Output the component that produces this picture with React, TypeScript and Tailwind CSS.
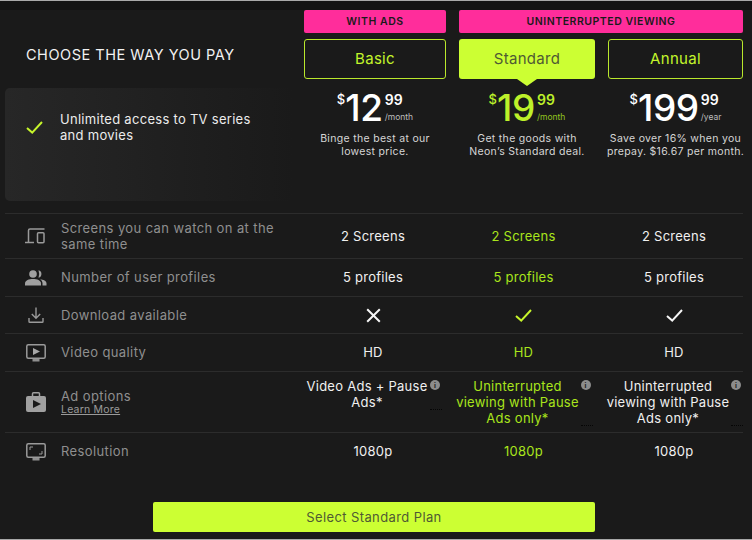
const cellTone = (i: number) => (i === 1 ? 'text-[#a9e51c]' : 'text-[#f0f0f0]');

const CheckMark = ({ className }: { className: string }) => (
  <svg width="17" height="13" viewBox="0 0 17 13" fill="none" className={className}>
    <path d="M1 7l5.2 4.6L16 1" stroke="currentColor" strokeWidth="2" />
  </svg>
);

const CrossMark = () => (
  <svg width="15" height="15" viewBox="0 0 15 15" fill="none" className="text-[#f5f5f5]">
    <path d="M1.2 1.2l12.6 12.6M13.8 1.2L1.2 13.8" stroke="currentColor" strokeWidth="2" />
  </svg>
);

const DevicesIcon = () => (
  <svg width="21" height="16" viewBox="0 0 21 16" fill="none" stroke="#9a9a9a" strokeWidth="1.5">
    <path d="M3.5 14V2.5q0-1.5 1.5-1.5h14.5" />
    <path d="M0 14.5h9" />
    <rect x="12.5" y="4.8" width="6.5" height="10" rx="1" />
  </svg>
);

const PeopleIcon = () => (
  <svg width="22" height="16" viewBox="0 0 22 16" fill="#a0a0a0">
    <circle cx="8" cy="4" r="3.8" />
    <path d="M13.5 0.3a3.8 3.8 0 0 1 0 7.4q1.4-3.7 0-7.4z" />
    <path d="M0 15.5v-2.2c0-2.8 4-4.3 8-4.3s8 1.5 8 4.3v2.2z" />
    <path d="M15 9.2c3.5 0.3 6.5 1.8 6.5 4.1v2.2h-4v-2.2c0-1.7-1-3-2.5-4.1z" />
  </svg>
);

const DownloadIcon = () => (
  <svg width="16" height="16" viewBox="0 0 16 16" fill="none" stroke="#9a9a9a" strokeWidth="1.4">
    <path d="M8 0.5v10.5M3.8 7l4.2 4.2L12.2 7" />
    <path d="M1 11v3.5q0 .8.8.8h12.4q.8 0 .8-.8V11" />
  </svg>
);

const VideoIcon = () => (
  <svg width="20" height="18" viewBox="0 0 20 18" fill="none">
    <rect x="0.8" y="0.8" width="18.4" height="13.4" rx="1.5" stroke="#9a9a9a" strokeWidth="1.5" />
    <path d="M7 4l7 3.5-7 3.5z" fill="#a8a8a8" />
    <rect x="6.5" y="15" width="7" height="2.5" fill="#8f8f8f" />
  </svg>
);

const AdsIcon = () => (
  <svg width="20" height="20" viewBox="0 0 20 20" fill="none">
    <rect x="6.5" y="0.8" width="7" height="5" rx="1" stroke="#a0a0a0" strokeWidth="1.5" />
    <rect x="0" y="4" width="20" height="16" rx="2" fill="#a0a0a0" />
    <path d="M7 8l8 4-8 4z" fill="#1a1a1a" />
  </svg>
);

const ResolutionIcon = () => (
  <svg width="20" height="18" viewBox="0 0 20 18" fill="none">
    <rect x="0.8" y="0.8" width="18.4" height="13.4" rx="1.5" stroke="#9a9a9a" strokeWidth="1.5" />
    <path d="M4 7V4h3M16 8v3h-3" stroke="#9a9a9a" strokeWidth="1" />
    <rect x="6.5" y="15" width="7" height="2.5" fill="#8f8f8f" />
  </svg>
);

const plans = [
  { id: 'basic', dollars: '12', cents: '99', period: '/month', lines: ['Binge the best at our', 'lowest price.'] },
  { id: 'standard', dollars: '19', cents: '99', period: '/month', lines: ['Get the goods with', 'Neon\u2019s Standard deal.'] },
  { id: 'annual', dollars: '199', cents: '99', period: '/year', lines: ['Save over 16% when you', 'prepay. $16.67 per month.'] },
];

const InfoDot = () => (
  <span className="absolute top-[8px] right-[3px] flex h-[10px] w-[10px] items-center justify-center rounded-full bg-[#8c8c8c] text-[7px] leading-none font-bold text-[#1a1a1a]">
    i
  </span>
);

const Row = ({
  icon,
  label,
  sub,
  className,
  children,
}: {
  icon: React.ReactNode;
  label: React.ReactNode;
  sub?: string;
  className: string;
  children: React.ReactNode;
}) => (
  <div className={`grid grid-cols-[287.5px_140px_140px_140px] gap-x-[10.5px] border-t border-[#2c2c2c] ${className}`}>
    <div className="flex items-center">
      <div className="flex w-[56px] justify-center pl-[5px]">{icon}</div>
      <div className="pb-[1px] text-[13px] leading-[16px] tracking-[0.03em] text-[#8f8f8f]">
        {label}
        {sub && <div className="text-[10.5px] leading-[12px] tracking-[0.02em] text-[#9a9a9a] underline">{sub}</div>}
      </div>
    </div>
    {children}
  </div>
);

const TextCells = ({ values, className = '' }: { values: string[]; className?: string }) => (
  <>
    {values.map((v, i) => (
      <div key={i} className={`flex items-center justify-center text-[13px] tracking-[0.02em] ${cellTone(i)} ${className}`}>
        {v}
      </div>
    ))}
  </>
);

export default function App() {
  return (
    <div
      className="flex h-[540px] w-[752px] flex-col overflow-hidden border-t border-b border-t-[#a8a8a8] border-b-[#a8a8a8] bg-[#1a1a1a]"
      style={{ fontFamily: 'Inter, "Liberation Sans", sans-serif' }}
    >
      <div className="h-[9px] bg-[#131313]" />

      <div className="ml-[5px] flex h-[203px] w-[738px]">
        <div className="w-[299px]">
          <h1 className="mt-[36px] ml-[21px] text-[14.5px] leading-[18px] tracking-[0.036em] text-[#f2f2f2]">
            CHOOSE THE WAY YOU PAY
          </h1>
          <div className="mt-[24px] flex h-[113px] w-[288px] items-start rounded-[5px] bg-gradient-to-r from-[#272727] to-[#1a1a1a] pt-[23px]">
            <CheckMark className="mt-[10px] ml-[21px] text-[#c6f52b]" />
            <p className="ml-[17px] text-[13px] leading-[16px] tracking-[0.022em] text-[#ececec]">
              Unlimited access to TV series
              <br />
              and movies
            </p>
          </div>
        </div>

        <div className="grid w-[439px] grid-cols-[142px_136px_135px] content-start gap-x-[13px]">
          <div className="flex h-[23px] items-center justify-center rounded-[2px] bg-[#ff2d9b] text-[10.5px] font-semibold tracking-[0.05em] text-[#1a1a1a]">
            WITH ADS
          </div>
          <div className="col-span-2 flex h-[23px] items-center justify-center rounded-[2px] bg-[#ff2d9b] text-[10.5px] font-semibold tracking-[0.05em] text-[#1a1a1a]">
            UNINTERRUPTED VIEWING
          </div>

          <div className="mt-[6px] flex h-[40px] items-center justify-center rounded-[3px] border border-[#b9e82c] pt-[1px] text-[15px] tracking-[0.02em] text-[#c3f52b]">
            Basic
          </div>
          <div className="relative mt-[6px] flex h-[40px] items-center justify-center rounded-[3px] bg-[#ccff33] pt-[1px] text-[15px] tracking-[0.02em] text-[#4f5a34]">
            Standard
            <span className="absolute top-full left-[58px] border-x-[10px] border-t-[7px] border-x-transparent border-t-[#ccff33]" />
          </div>
          <div className="mt-[6px] flex h-[40px] items-center justify-center rounded-[3px] border border-[#b9e82c] pt-[1px] text-[15px] tracking-[0.02em] text-[#c3f52b]">
            Annual
          </div>

          {plans.map((plan) => {
            const highlighted = plan.id === 'standard';
            return (
              <div key={plan.id} className={`mt-[11px] ${plan.id === 'basic' ? '' : '-mx-[6px]'}`}>
                <div className={`flex justify-center ${highlighted ? 'text-[#bdf02a]' : 'text-white'}`}>
                  <span className="mt-[2px] text-[13px] leading-[14px] font-medium">$</span>
                  <span className="text-[37px] leading-[36px] font-medium tracking-[-0.01em]">{plan.dollars}</span>
                  <span className="ml-[2px] flex flex-col">
                    <span className="mt-[2px] text-[14px] leading-[15px] font-semibold">{plan.cents}</span>
                    <span className={`mt-[5px] text-[8.5px] leading-[10px] ${highlighted ? 'text-[#93c41f]' : 'text-[#bdbdbd]'}`}>
                      {plan.period}
                    </span>
                  </span>
                </div>
                <p className="mt-[6px] text-center text-[10.5px] leading-[13px] tracking-[0.03em] whitespace-nowrap text-[#d6d6d6]">
                  {plan.lines[0]}
                  <br />
                  {plan.lines[1]}
                </p>
              </div>
            );
          })}
        </div>
      </div>

      <div className="ml-[5px] w-[738px]">
        <Row
          className="h-[45px]"
          icon={<DevicesIcon />}
          label={
            <>
              Screens you can watch on at the
              <br />
              same time
            </>
          }
        >
          <TextCells values={['2 Screens', '2 Screens', '2 Screens']} className="pt-[2px]" />
        </Row>
        <Row className="h-[38px]" icon={<PeopleIcon />} label="Number of user profiles">
          <TextCells values={['5 profiles', '5 profiles', '5 profiles']} />
        </Row>
        <Row className="h-[37px]" icon={<DownloadIcon />} label="Download available">
          <div className="flex items-center justify-center">
            <CrossMark />
          </div>
          <div className="flex items-center justify-center">
            <CheckMark className="text-[#c6f52b]" />
          </div>
          <div className="flex items-center justify-center">
            <CheckMark className="text-[#f5f5f5]" />
          </div>
        </Row>
        <Row className="h-[38px]" icon={<VideoIcon />} label="Video quality">
          <TextCells values={['HD', 'HD', 'HD']} />
        </Row>
        <Row className="h-[61px]" icon={<AdsIcon />} label="Ad options" sub="Learn More">
          <div className="relative pt-[6px] pr-[12px] text-center text-[13px] leading-[16px] tracking-[0.02em] text-[#f0f0f0]">
            Video Ads + Pause
            <br />
            Ads*
            <InfoDot />
            <span className="absolute top-[37px] right-[1px] w-[12px] border-t border-dotted border-[#050505]" />
          </div>
          <div className="relative pt-[6px] pr-[12px] text-center text-[13px] leading-[16px] tracking-[0.02em] text-[#a9e51c]">
            Uninterrupted
            <br />
            viewing with Pause
            <br />
            Ads only*
            <InfoDot />
            <span className="absolute top-[53px] right-[1px] w-[12px] border-t border-dotted border-[#050505]" />
          </div>
          <div className="relative pt-[6px] pr-[12px] text-center text-[13px] leading-[16px] tracking-[0.02em] text-[#f0f0f0]">
            Uninterrupted
            <br />
            viewing with Pause
            <br />
            Ads only*
            <InfoDot />
            <span className="absolute top-[53px] right-[1px] w-[12px] border-t border-dotted border-[#050505]" />
          </div>
        </Row>
        <Row className="h-[38px]" icon={<ResolutionIcon />} label="Resolution">
          <TextCells values={['1080p', '1080p', '1080p']} />
        </Row>
      </div>

      <button className="mt-[32px] ml-[153px] h-[30px] w-[442px] rounded-[2px] bg-[#ccff33] pt-[1px] text-[13px] tracking-[0.03em] text-[#4f5a34]">
        Select Standard Plan
      </button>
    </div>
  );
}
